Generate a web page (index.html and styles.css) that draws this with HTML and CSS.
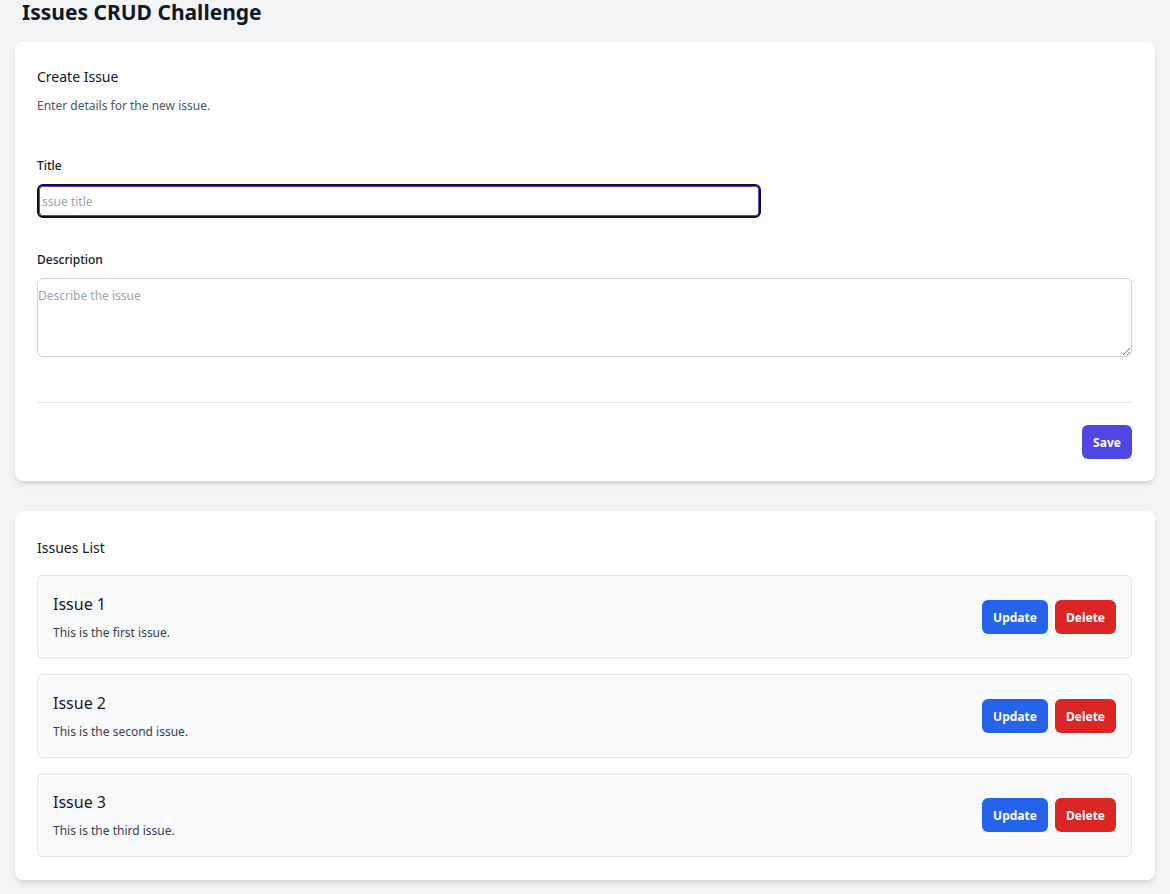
FILE: index.html
```html
<!DOCTYPE html>
<html lang="en">
<head>
<meta charset="utf-8">
<title>Issues CRUD Challenge</title>
<link rel="stylesheet" href="styles.css">
</head>
<body>
<main class="page">
  <h1 class="page-title">Issues CRUD Challenge</h1>

  <section class="card">
    <h2 class="card-title">Create Issue</h2>
    <p class="card-sub">Enter details for the new issue.</p>
    <form class="form">
      <div class="field">
        <label class="label" for="title">Title</label>
        <input id="title" class="input input-title" type="text" placeholder="Issue title">
      </div>
      <div class="field">
        <label class="label" for="desc">Description</label>
        <textarea id="desc" class="input textarea" placeholder="Describe the issue"></textarea>
      </div>
      <div class="form-footer">
        <button type="button" class="btn btn-save">Save</button>
      </div>
    </form>
  </section>

  <section class="card card-list">
    <h2 class="card-title">Issues List</h2>
    <ul class="issues">
      <li class="issue">
        <div class="issue-text">
          <h3 class="issue-title">Issue 1</h3>
          <p class="issue-desc">This is the first issue.</p>
        </div>
        <div class="issue-actions">
          <button class="btn btn-update">Update</button>
          <button class="btn btn-delete">Delete</button>
        </div>
      </li>
      <li class="issue">
        <div class="issue-text">
          <h3 class="issue-title">Issue 2</h3>
          <p class="issue-desc">This is the second issue.</p>
        </div>
        <div class="issue-actions">
          <button class="btn btn-update">Update</button>
          <button class="btn btn-delete">Delete</button>
        </div>
      </li>
      <li class="issue">
        <div class="issue-text">
          <h3 class="issue-title">Issue 3</h3>
          <p class="issue-desc">This is the third issue.</p>
        </div>
        <div class="issue-actions">
          <button class="btn btn-update">Update</button>
          <button class="btn btn-delete">Delete</button>
        </div>
      </li>
    </ul>
  </section>
</main>
</body>
</html>
```
FILE: styles.css
```css
* { box-sizing: border-box; }
html, body {
  margin: 0;
  padding: 0;
  background: #f3f4f6;
  font-family: "Noto Sans", "Open Sans", sans-serif;
  color: #111827;
}
.page {
  padding: 0 15px 20px;
}
.page-title {
  margin: 0;
  padding: 0 0 0 7px;
  font-size: 21px;
  line-height: 24px;
  font-weight: 700;
  color: #111827;
  height: 42px;
}
.card {
  background: #fff;
  border-radius: 8px;
  box-shadow: 0 4px 6px -1px rgba(0,0,0,0.1), 0 2px 4px -2px rgba(0,0,0,0.1);
  padding: 25px 23px 22px 22px;
}
.card-list {
  margin-top: 30px;
  padding-top: 27px;
  padding-bottom: 23px;
}
.card-title {
  margin: 0;
  font-size: 14px;
  line-height: 20px;
  font-weight: 400;
  color: #111827;
}
.card-sub {
  margin: 10px 0 0;
  font-size: 12px;
  line-height: 18px;
  color: #4b5563;
}
.form {
  margin-top: 43px;
}
.field {
  display: flex;
  flex-direction: column;
}
.field + .field {
  margin-top: 34px;
}
.label {
  font-size: 12px;
  line-height: 16px;
  font-weight: 500;
  color: #111827;
  margin-bottom: 10px;
}
.input {
  font-family: inherit;
  font-size: 12px;
  color: #111827;
  border: 1px solid #d1d5db;
  border-radius: 6px;
  background: #fff;
  outline: none;
}
.input::placeholder {
  color: #9ca3af;
}
.input-title {
  width: 66.1%;
  height: 34px;
  border: 2px solid #111;
  box-shadow: inset 0 0 0 1px #4f46e5;
  padding: 0 0 0 2px;
  text-indent: -3px;
}
.textarea {
  height: 79px;
  padding: 8px 0 0;
  resize: vertical;
}
.form-footer {
  margin-top: 45px;
  border-top: 1px solid #e5e7eb;
  padding-top: 22px;
  display: flex;
  justify-content: flex-end;
}
.btn {
  font-family: inherit;
  font-size: 12px;
  font-weight: 700;
  color: #fff;
  border: none;
  border-radius: 6px;
  height: 34px;
  padding: 0 11px;
  cursor: pointer;
}
.btn-save { background: #4f46e5; width: 50px; padding: 0; }
.btn-update { background: #2563eb; width: 66px; padding: 0; }
.btn-delete { background: #dc2626; width: 61px; padding: 0; }
.issues {
  list-style: none;
  margin: 17px 0 0;
  padding: 0;
  display: flex;
  flex-direction: column;
  gap: 15px;
}
.issue {
  background: #f9fafb;
  border: 1px solid #e5e7eb;
  border-radius: 6px;
  padding: 0 15px;
  height: 84px;
  display: flex;
  align-items: center;
  justify-content: space-between;
}
.issue-title {
  margin: 0;
  font-size: 16px;
  line-height: 22px;
  font-weight: 400;
  color: #111827;
}
.issue-desc {
  margin: 10px 0 0;
  font-size: 12px;
  line-height: 16px;
  color: #374151;
}
.issue-actions {
  display: flex;
  gap: 7px;
}
```
